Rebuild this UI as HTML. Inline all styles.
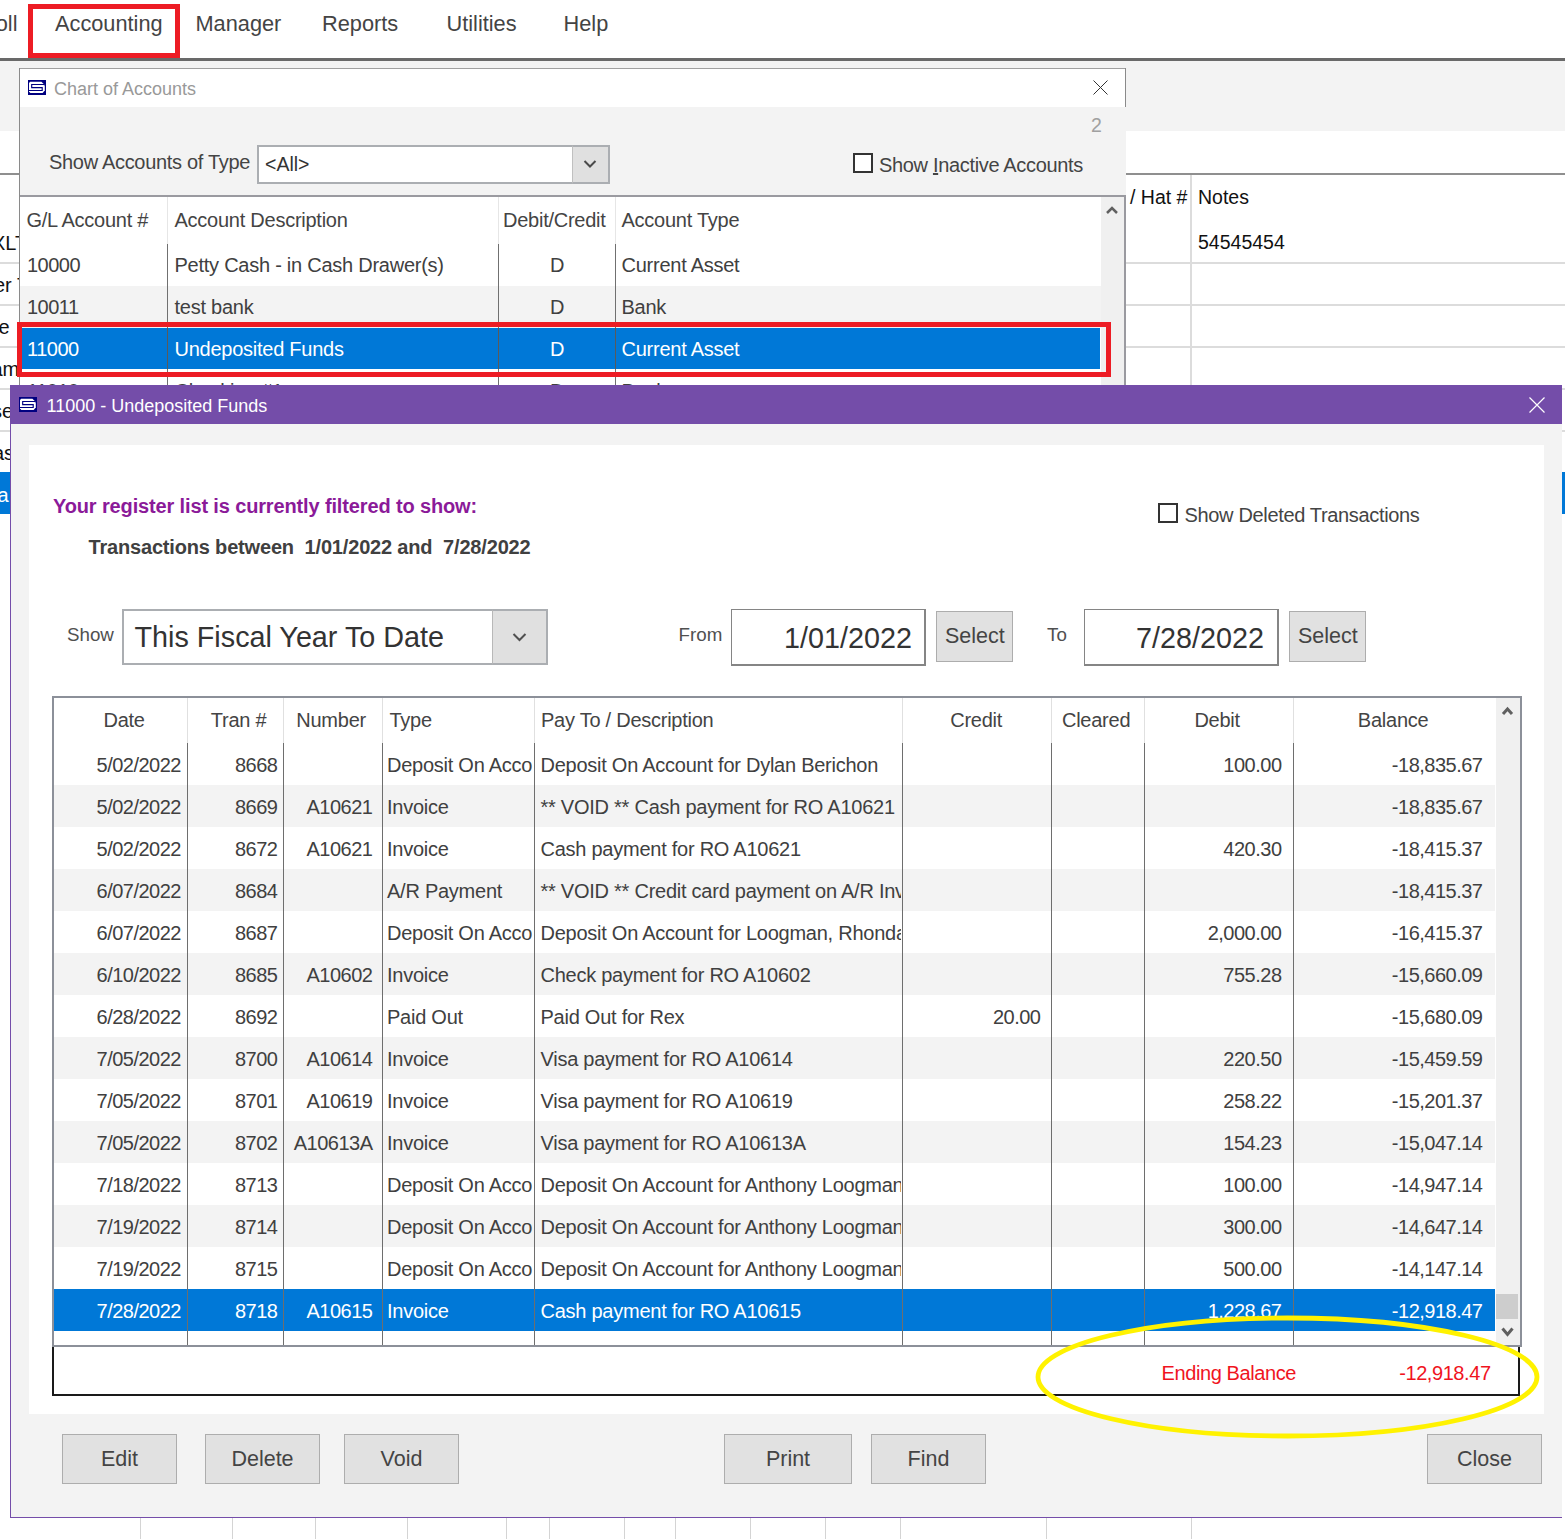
<!DOCTYPE html>
<html><head><meta charset="utf-8"><style>
html,body{margin:0;padding:0;width:1565px;height:1539px;overflow:hidden;background:#fff}
.a{position:absolute}
.t{white-space:nowrap;font-family:"Liberation Sans", sans-serif}
svg.a{overflow:visible}
</style></head><body>
<div class="a" style="left:0px;top:0px;width:1565px;height:1539px;background:#ffffff;"></div>
<div class="a t" style="top:12.59px;font-size:21.75px;line-height:21.75px;color:#444;left:-11.5px;">roll</div>
<div class="a t" style="top:12.59px;font-size:21.75px;line-height:21.75px;color:#444;left:55px;">Accounting</div>
<div class="a t" style="top:12.59px;font-size:21.75px;line-height:21.75px;color:#444;left:195.5px;">Manager</div>
<div class="a t" style="top:12.59px;font-size:21.75px;line-height:21.75px;color:#444;left:322px;">Reports</div>
<div class="a t" style="top:12.59px;font-size:21.75px;line-height:21.75px;color:#444;left:446.5px;">Utilities</div>
<div class="a t" style="top:12.59px;font-size:21.75px;line-height:21.75px;color:#444;left:563.5px;">Help</div>
<div class="a" style="left:28px;top:4px;width:152px;height:54px;border:5px solid #ed1c24;box-sizing:border-box;"></div>
<div class="a" style="left:0px;top:58px;width:1565px;height:3px;background:#696969;"></div>
<div class="a" style="left:0px;top:61px;width:1565px;height:70px;background:#f3f3f3;"></div>
<div class="a" style="left:0px;top:173px;width:1565px;height:2px;background:#8f8f8f;"></div>
<div class="a" style="left:0px;top:262px;width:1565px;height:2px;background:#dcdcdc;"></div>
<div class="a" style="left:0px;top:304px;width:1565px;height:2px;background:#dcdcdc;"></div>
<div class="a" style="left:0px;top:346px;width:1565px;height:2px;background:#dcdcdc;"></div>
<div class="a" style="left:0px;top:388px;width:1565px;height:2px;background:#dcdcdc;"></div>
<div class="a" style="left:0px;top:430px;width:1565px;height:2px;background:#dcdcdc;"></div>
<div class="a" style="left:0px;top:472px;width:1565px;height:42px;background:#0078d7;"></div>
<div class="a" style="left:1190px;top:175px;width:2px;height:400px;background:#dcdcdc;"></div>
<div class="a t" style="top:187.99px;font-size:19.5px;line-height:19.5px;color:#111;left:1130px;">/ Hat #</div>
<div class="a t" style="top:187.99px;font-size:19.5px;line-height:19.5px;color:#111;left:1198px;">Notes</div>
<div class="a t" style="top:233.49px;font-size:19.5px;line-height:19.5px;color:#111;left:1198px;">54545454</div>
<div class="a t" style="top:232.57px;font-size:20px;line-height:20px;color:#111;left:-8px;">XLT</div>
<div class="a t" style="top:274.57px;font-size:20px;line-height:20px;color:#111;left:-6px;">er T</div>
<div class="a t" style="top:316.57px;font-size:20px;line-height:20px;color:#111;left:-1.4px;">e</div>
<div class="a t" style="top:358.57px;font-size:20px;line-height:20px;color:#111;left:-8.6px;">am</div>
<div class="a t" style="top:400.57px;font-size:20px;line-height:20px;color:#111;left:-8px;">se</div>
<div class="a t" style="top:442.57px;font-size:20px;line-height:20px;color:#111;left:-7px;">as</div>
<div class="a t" style="top:484.57px;font-size:20px;line-height:20px;color:#fff;left:-2.6px;">a</div>
<div class="a" style="left:140px;top:1517px;width:1px;height:22px;background:#d4d4d4;"></div>
<div class="a" style="left:232px;top:1517px;width:1px;height:22px;background:#d4d4d4;"></div>
<div class="a" style="left:315px;top:1517px;width:1px;height:22px;background:#d4d4d4;"></div>
<div class="a" style="left:407px;top:1517px;width:1px;height:22px;background:#d4d4d4;"></div>
<div class="a" style="left:506px;top:1517px;width:1px;height:22px;background:#d4d4d4;"></div>
<div class="a" style="left:549px;top:1517px;width:1px;height:22px;background:#d4d4d4;"></div>
<div class="a" style="left:624px;top:1517px;width:1px;height:22px;background:#d4d4d4;"></div>
<div class="a" style="left:675px;top:1517px;width:1px;height:22px;background:#d4d4d4;"></div>
<div class="a" style="left:750px;top:1517px;width:1px;height:22px;background:#d4d4d4;"></div>
<div class="a" style="left:825px;top:1517px;width:1px;height:22px;background:#d4d4d4;"></div>
<div class="a" style="left:900px;top:1517px;width:1px;height:22px;background:#d4d4d4;"></div>
<div class="a" style="left:1046px;top:1517px;width:1px;height:22px;background:#d4d4d4;"></div>
<div class="a" style="left:1191px;top:1517px;width:1px;height:22px;background:#d4d4d4;"></div>
<div class="a" style="left:19px;top:68px;width:1107px;height:330px;background:#f3f3f3;border-left:1px solid #8a8a8a;border-top:1px solid #a0a0a0;box-sizing:border-box"></div>
<div class="a" style="left:1125px;top:68px;width:1px;height:39px;background:#8a8a8a;"></div>
<div class="a" style="left:20px;top:69px;width:1105px;height:38px;background:#ffffff;"></div>
<svg class="a" style="left:28px;top:80px" width="18" height="15" viewBox="0 0 18 15"><rect width="18" height="15" fill="#000080"/><path d="M2.2 1.8 H13.4 L16.8 4.9 V10.6 L14.6 13 H2.3 L1 11.6 V3 Z" fill="#fff"/><path d="M17 5 L15.6 4.5 H3.7 V7.6 H14.2 V10.5 H0.6" fill="none" stroke="#000080" stroke-width="1.15"/></svg>
<div class="a t" style="top:80.26px;font-size:18px;line-height:18px;color:#999;left:54px;">Chart of Accounts</div>
<svg class="a" style="left:1093px;top:80px" width="15" height="15"><path d="M0.5 0.5 L14.5 14.5 M14.5 0.5 L0.5 14.5" stroke="#333" stroke-width="1"/></svg>
<div class="a t" style="top:116.49px;font-size:19.5px;line-height:19.5px;color:#a0a0a0;left:1091px;">2</div>
<div class="a t" style="top:151.57px;font-size:20px;line-height:20px;color:#444;letter-spacing:-0.31px;left:49px;">Show Accounts of Type</div>
<div class="a" style="left:257px;top:145px;width:353px;height:38.5px;background:#ffffff;border:2px solid #abaeb2;box-sizing:border-box;"></div>
<div class="a" style="left:572px;top:145px;width:38px;height:38.5px;background:#e0e0e0;border:2px solid #abaeb2;border-left:1.5px solid #c0c0c0;border-right-width:2.5px;border-bottom-width:2.5px;box-sizing:border-box"></div>
<svg class="a" style="left:0;top:0" width="1" height="1"><path d="M584.5 161 L590 166.5 L595.5 161" fill="none" stroke="#4a4a4a" stroke-width="2"/></svg>
<div class="a t" style="top:155.49px;font-size:19.5px;line-height:19.5px;color:#333;left:265px;">&lt;All&gt;</div>
<div class="a" style="left:853px;top:153px;width:20px;height:20px;background:#ffffff;border:2px solid #333;box-sizing:border-box;"></div>
<div class="a t" style="top:154.57px;font-size:20px;line-height:20px;color:#444;letter-spacing:-0.33px;left:879px;">Show <u>I</u>nactive Accounts</div>
<div class="a" style="left:20px;top:195px;width:1106px;height:200px;background:#ffffff;"></div>
<div class="a" style="left:19px;top:195px;width:1107px;height:2px;background:#9a9aa0;"></div>
<div class="a" style="left:19px;top:68px;width:1px;height:330px;background:#8a8a8a;"></div>
<div class="a" style="left:20px;top:286px;width:1081px;height:42px;background:#f3f3f3;"></div>
<div class="a" style="left:20px;top:370px;width:1081px;height:42px;background:#ffffff;"></div>
<div class="a" style="left:167px;top:197px;width:1px;height:47px;background:#e6e6e6;"></div>
<div class="a" style="left:167px;top:244px;width:1px;height:160px;background:#707070;"></div>
<div class="a" style="left:498px;top:197px;width:1px;height:47px;background:#e6e6e6;"></div>
<div class="a" style="left:498px;top:244px;width:1px;height:160px;background:#707070;"></div>
<div class="a" style="left:615px;top:197px;width:1px;height:47px;background:#e6e6e6;"></div>
<div class="a" style="left:615px;top:244px;width:1px;height:160px;background:#707070;"></div>
<div class="a" style="left:1101px;top:197px;width:24px;height:200px;background:#f0f0f0;"></div>
<div class="a" style="left:1124px;top:195px;width:2px;height:200px;background:#9a9aa0;"></div>
<svg class="a" style="left:1105px;top:205px" width="14" height="10"><path d="M2 8 L7 3 L12 8" fill="none" stroke="#606060" stroke-width="2.5"/></svg>
<div class="a t" style="top:209.57px;font-size:20px;line-height:20px;color:#444;letter-spacing:-0.25px;left:26.5px;">G/L Account #</div>
<div class="a t" style="top:209.57px;font-size:20px;line-height:20px;color:#444;letter-spacing:-0.25px;left:174.5px;">Account Description</div>
<div class="a t" style="top:209.57px;font-size:20px;line-height:20px;color:#444;letter-spacing:-0.25px;left:503px;">Debit/Credit</div>
<div class="a t" style="top:209.57px;font-size:20px;line-height:20px;color:#444;letter-spacing:-0.25px;left:621.5px;">Account Type</div>
<div class="a" style="left:20px;top:328px;width:1080px;height:41px;background:#0078d7;"></div>
<div class="a" style="left:167px;top:328px;width:1px;height:41px;background:#5a5a5a;"></div>
<div class="a" style="left:498px;top:328px;width:1px;height:41px;background:#5a5a5a;"></div>
<div class="a" style="left:615px;top:328px;width:1px;height:41px;background:#5a5a5a;"></div>
<div class="a t" style="top:254.57px;font-size:20px;line-height:20px;color:#404040;letter-spacing:-0.5px;left:27px;">10000</div>
<div class="a t" style="top:254.57px;font-size:20px;line-height:20px;color:#404040;letter-spacing:-0.25px;left:174.5px;">Petty Cash - in Cash Drawer(s)</div>
<div class="a t" style="top:254.57px;font-size:20px;line-height:20px;color:#404040;letter-spacing:-0.25px;left:257.125px;width:600px;text-align:center;">D</div>
<div class="a t" style="top:254.57px;font-size:20px;line-height:20px;color:#404040;letter-spacing:-0.25px;left:621.5px;">Current Asset</div>
<div class="a t" style="top:296.57px;font-size:20px;line-height:20px;color:#404040;letter-spacing:-0.5px;left:27px;">10011</div>
<div class="a t" style="top:296.57px;font-size:20px;line-height:20px;color:#404040;letter-spacing:-0.25px;left:174.5px;">test bank</div>
<div class="a t" style="top:296.57px;font-size:20px;line-height:20px;color:#404040;letter-spacing:-0.25px;left:257.125px;width:600px;text-align:center;">D</div>
<div class="a t" style="top:296.57px;font-size:20px;line-height:20px;color:#404040;letter-spacing:-0.25px;left:621.5px;">Bank</div>
<div class="a t" style="top:338.57px;font-size:20px;line-height:20px;color:#fff;letter-spacing:-0.5px;left:27px;">11000</div>
<div class="a t" style="top:338.57px;font-size:20px;line-height:20px;color:#fff;letter-spacing:-0.25px;left:174.5px;">Undeposited Funds</div>
<div class="a t" style="top:338.57px;font-size:20px;line-height:20px;color:#fff;letter-spacing:-0.25px;left:257.125px;width:600px;text-align:center;">D</div>
<div class="a t" style="top:338.57px;font-size:20px;line-height:20px;color:#fff;letter-spacing:-0.25px;left:621.5px;">Current Asset</div>
<div class="a t" style="top:380.57px;font-size:20px;line-height:20px;color:#404040;letter-spacing:-0.5px;left:27px;">11010</div>
<div class="a t" style="top:380.57px;font-size:20px;line-height:20px;color:#404040;letter-spacing:-0.25px;left:174.5px;">Checking #1</div>
<div class="a t" style="top:380.57px;font-size:20px;line-height:20px;color:#404040;letter-spacing:-0.25px;left:257.125px;width:600px;text-align:center;">D</div>
<div class="a t" style="top:380.57px;font-size:20px;line-height:20px;color:#404040;letter-spacing:-0.25px;left:621.5px;">Bank</div>
<div class="a" style="left:17px;top:322px;width:1094px;height:55px;border:5px solid #ed1c24;box-sizing:border-box;"></div>
<div class="a" style="left:10px;top:385px;width:1552px;height:1133px;background:#f3f3f3;border-left:1px solid #744da9;border-bottom:1px solid #744da9;box-sizing:border-box"></div>
<div class="a" style="left:10px;top:385px;width:1552px;height:39px;background:#744da9;"></div>
<svg class="a" style="left:19px;top:397px" width="18" height="15" viewBox="0 0 18 15"><rect width="18" height="15" fill="#000080"/><path d="M2.2 1.8 H13.4 L16.8 4.9 V10.6 L14.6 13 H2.3 L1 11.6 V3 Z" fill="#fff"/><path d="M17 5 L15.6 4.5 H3.7 V7.6 H14.2 V10.5 H0.6" fill="none" stroke="#000080" stroke-width="1.15"/></svg>
<div class="a t" style="top:397.26px;font-size:18px;line-height:18px;color:#ffffff;left:46.5px;">11000 - Undeposited Funds</div>
<svg class="a" style="left:1529px;top:397px" width="16" height="16"><path d="M0.5 0.5 L15.5 15.5 M15.5 0.5 L0.5 15.5" stroke="#fff" stroke-width="1.2"/></svg>
<div class="a" style="left:29px;top:445px;width:1515px;height:969px;background:#ffffff;"></div>
<div class="a t" style="top:495.57px;font-size:20px;line-height:20px;color:#8b1a99;letter-spacing:-0.14px;font-weight:bold;left:53px;">Your register list is currently filtered to show:</div>
<div class="a t" style="top:537.07px;font-size:20px;line-height:20px;color:#404040;letter-spacing:-0.18px;font-weight:bold;left:88.5px;">Transactions between&nbsp; 1/01/2022 and&nbsp; 7/28/2022</div>
<div class="a" style="left:1158px;top:503px;width:20px;height:20px;background:#ffffff;border:2px solid #333;box-sizing:border-box;"></div>
<div class="a t" style="top:504.57px;font-size:20px;line-height:20px;color:#444;letter-spacing:-0.34px;left:1184.5px;">Show Deleted Transactions</div>
<div class="a t" style="top:626.13px;font-size:18.75px;line-height:18.75px;color:#505050;left:67px;">Show</div>
<div class="a" style="left:122px;top:608.5px;width:426px;height:56.5px;background:#ffffff;border:2px solid #abaeb2;box-sizing:border-box;"></div>
<div class="a" style="left:492px;top:608.5px;width:56px;height:56.5px;background:#e0e0e0;border:2px solid #abaeb2;border-left:1.5px solid #b8b8b8;border-right-width:2.5px;border-bottom-width:2.5px;box-sizing:border-box"></div>
<svg class="a" style="left:0;top:0" width="1" height="1"><path d="M513.5 634 L519.5 640 L525.5 634" fill="none" stroke="#505050" stroke-width="2"/></svg>
<div class="a t" style="top:622.66px;font-size:28.75px;line-height:28.75px;color:#333;left:134.5px;">This Fiscal Year To Date</div>
<div class="a t" style="top:625.63px;font-size:18.75px;line-height:18.75px;color:#505050;left:678.5px;">From</div>
<div class="a" style="left:731px;top:609px;width:195px;height:57px;background:#ffffff;border:1px solid #858585;border-right-width:2px;border-bottom-width:2px;box-sizing:border-box"></div>
<div class="a t" style="top:623.66px;font-size:28.75px;line-height:28.75px;color:#333;right:653px;text-align:right;">1/01/2022</div>
<div class="a" style="left:936px;top:611px;width:77px;height:51px;background:#e1e1e1;border:1px solid #adadad;box-sizing:border-box;"></div>
<div class="a t" style="top:625.80px;font-size:21.5px;line-height:21.5px;color:#444;left:945px;">Select</div>
<div class="a t" style="top:625.63px;font-size:18.75px;line-height:18.75px;color:#505050;left:1047px;">To</div>
<div class="a" style="left:1084px;top:609px;width:195px;height:57px;background:#ffffff;border:1px solid #858585;border-right-width:2px;border-bottom-width:2px;box-sizing:border-box"></div>
<div class="a t" style="top:623.66px;font-size:28.75px;line-height:28.75px;color:#333;right:301px;text-align:right;">7/28/2022</div>
<div class="a" style="left:1289px;top:611px;width:77px;height:51px;background:#e1e1e1;border:1px solid #adadad;box-sizing:border-box;"></div>
<div class="a t" style="top:625.80px;font-size:21.5px;line-height:21.5px;color:#444;left:1298px;">Select</div>
<div class="a" style="left:52px;top:696px;width:1470px;height:651px;background:#ffffff;"></div>
<div class="a" style="left:53px;top:785px;width:1442px;height:42px;background:#f3f3f3;"></div>
<div class="a" style="left:53px;top:869px;width:1442px;height:42px;background:#f3f3f3;"></div>
<div class="a" style="left:53px;top:953px;width:1442px;height:42px;background:#f3f3f3;"></div>
<div class="a" style="left:53px;top:1037px;width:1442px;height:42px;background:#f3f3f3;"></div>
<div class="a" style="left:53px;top:1121px;width:1442px;height:42px;background:#f3f3f3;"></div>
<div class="a" style="left:53px;top:1205px;width:1442px;height:42px;background:#f3f3f3;"></div>
<div class="a" style="left:53px;top:1289px;width:1442px;height:42px;background:#0078d7;"></div>
<div class="a" style="left:187px;top:697px;width:1px;height:46px;background:#e0e0e0;"></div>
<div class="a" style="left:187px;top:743px;width:1px;height:603px;background:#6e6e6e;"></div>
<div class="a" style="left:283px;top:697px;width:1px;height:46px;background:#e0e0e0;"></div>
<div class="a" style="left:283px;top:743px;width:1px;height:603px;background:#6e6e6e;"></div>
<div class="a" style="left:382px;top:697px;width:1px;height:46px;background:#e0e0e0;"></div>
<div class="a" style="left:382px;top:743px;width:1px;height:603px;background:#6e6e6e;"></div>
<div class="a" style="left:534px;top:697px;width:1px;height:46px;background:#e0e0e0;"></div>
<div class="a" style="left:534px;top:743px;width:1px;height:603px;background:#6e6e6e;"></div>
<div class="a" style="left:902px;top:697px;width:1px;height:46px;background:#e0e0e0;"></div>
<div class="a" style="left:902px;top:743px;width:1px;height:603px;background:#6e6e6e;"></div>
<div class="a" style="left:1051px;top:697px;width:1px;height:46px;background:#e0e0e0;"></div>
<div class="a" style="left:1051px;top:743px;width:1px;height:603px;background:#6e6e6e;"></div>
<div class="a" style="left:1144px;top:697px;width:1px;height:46px;background:#e0e0e0;"></div>
<div class="a" style="left:1144px;top:743px;width:1px;height:603px;background:#6e6e6e;"></div>
<div class="a" style="left:1293px;top:697px;width:1px;height:46px;background:#e0e0e0;"></div>
<div class="a" style="left:1293px;top:743px;width:1px;height:603px;background:#6e6e6e;"></div>
<div class="a" style="left:1496px;top:697px;width:24px;height:649px;background:#f0f0f0;"></div>
<div class="a" style="left:1496px;top:1294px;width:22px;height:25px;background:#cdcdcd;"></div>
<svg class="a" style="left:1500px;top:703px" width="15" height="14"><path d="M3 11 L7.5 6 L12 11" fill="none" stroke="#606060" stroke-width="3"/></svg>
<svg class="a" style="left:1500px;top:1325px" width="15" height="14"><path d="M2.5 3.5 L7.5 9.5 L12.5 3.5" fill="none" stroke="#606060" stroke-width="3"/></svg>
<div class="a" style="left:52px;top:696px;width:1470px;height:2px;background:#8c9099;"></div>
<div class="a" style="left:52px;top:696px;width:2px;height:651px;background:#8c9099;"></div>
<div class="a" style="left:1520px;top:696px;width:2px;height:651px;background:#8c9099;"></div>
<div class="a" style="left:52px;top:1345px;width:1470px;height:2px;background:#8c9099;"></div>
<div class="a t" style="top:709.57px;font-size:20px;line-height:20px;color:#444;letter-spacing:-0.25px;left:-175.875px;width:600px;text-align:center;">Date</div>
<div class="a t" style="top:709.57px;font-size:20px;line-height:20px;color:#444;letter-spacing:-0.25px;left:-61.375px;width:600px;text-align:center;">Tran #</div>
<div class="a t" style="top:709.57px;font-size:20px;line-height:20px;color:#444;letter-spacing:-0.25px;left:31.125px;width:600px;text-align:center;">Number</div>
<div class="a t" style="top:709.57px;font-size:20px;line-height:20px;color:#444;letter-spacing:-0.25px;left:389.5px;">Type</div>
<div class="a t" style="top:709.57px;font-size:20px;line-height:20px;color:#444;letter-spacing:-0.25px;left:541px;">Pay To / Description</div>
<div class="a t" style="top:709.57px;font-size:20px;line-height:20px;color:#444;letter-spacing:-0.25px;left:676.125px;width:600px;text-align:center;">Credit</div>
<div class="a t" style="top:709.57px;font-size:20px;line-height:20px;color:#444;letter-spacing:-0.25px;left:796.125px;width:600px;text-align:center;">Cleared</div>
<div class="a t" style="top:709.57px;font-size:20px;line-height:20px;color:#444;letter-spacing:-0.25px;left:917.125px;width:600px;text-align:center;">Debit</div>
<div class="a t" style="top:709.57px;font-size:20px;line-height:20px;color:#444;letter-spacing:-0.25px;left:1093.125px;width:600px;text-align:center;">Balance</div>
<div class="a t" style="top:754.57px;font-size:20px;line-height:20px;color:#404040;letter-spacing:-0.5px;right:1384.0px;text-align:right;">5/02/2022</div>
<div class="a t" style="top:754.57px;font-size:20px;line-height:20px;color:#404040;letter-spacing:-0.5px;right:1287.5px;text-align:right;">8668</div>
<div class="a" style="left:383px;top:741.5px;width:150px;height:40px;overflow:hidden">
<div class="a t" style="top:13.07px;font-size:20px;line-height:20px;color:#404040;letter-spacing:-0.25px;left:4px;">Deposit On Account</div>
</div>
<div class="a" style="left:535px;top:741.5px;width:366px;height:40px;overflow:hidden">
<div class="a t" style="top:13.07px;font-size:20px;line-height:20px;color:#404040;letter-spacing:-0.25px;left:5.5px;">Deposit On Account for Dylan Berichon</div>
</div>
<div class="a t" style="top:754.57px;font-size:20px;line-height:20px;color:#404040;letter-spacing:-0.5px;right:283.5px;text-align:right;">100.00</div>
<div class="a t" style="top:754.57px;font-size:20px;line-height:20px;color:#404040;letter-spacing:-0.5px;right:82.5px;text-align:right;">-18,835.67</div>
<div class="a t" style="top:796.57px;font-size:20px;line-height:20px;color:#404040;letter-spacing:-0.5px;right:1384.0px;text-align:right;">5/02/2022</div>
<div class="a t" style="top:796.57px;font-size:20px;line-height:20px;color:#404040;letter-spacing:-0.5px;right:1287.5px;text-align:right;">8669</div>
<div class="a t" style="top:796.57px;font-size:20px;line-height:20px;color:#404040;letter-spacing:-0.5px;right:1192.5px;text-align:right;">A10621</div>
<div class="a" style="left:383px;top:783.5px;width:150px;height:40px;overflow:hidden">
<div class="a t" style="top:13.07px;font-size:20px;line-height:20px;color:#404040;letter-spacing:-0.25px;left:4px;">Invoice</div>
</div>
<div class="a" style="left:535px;top:783.5px;width:366px;height:40px;overflow:hidden">
<div class="a t" style="top:13.07px;font-size:20px;line-height:20px;color:#404040;letter-spacing:-0.25px;left:5.5px;">** VOID ** Cash payment for RO A10621</div>
</div>
<div class="a t" style="top:796.57px;font-size:20px;line-height:20px;color:#404040;letter-spacing:-0.5px;right:82.5px;text-align:right;">-18,835.67</div>
<div class="a t" style="top:838.57px;font-size:20px;line-height:20px;color:#404040;letter-spacing:-0.5px;right:1384.0px;text-align:right;">5/02/2022</div>
<div class="a t" style="top:838.57px;font-size:20px;line-height:20px;color:#404040;letter-spacing:-0.5px;right:1287.5px;text-align:right;">8672</div>
<div class="a t" style="top:838.57px;font-size:20px;line-height:20px;color:#404040;letter-spacing:-0.5px;right:1192.5px;text-align:right;">A10621</div>
<div class="a" style="left:383px;top:825.5px;width:150px;height:40px;overflow:hidden">
<div class="a t" style="top:13.07px;font-size:20px;line-height:20px;color:#404040;letter-spacing:-0.25px;left:4px;">Invoice</div>
</div>
<div class="a" style="left:535px;top:825.5px;width:366px;height:40px;overflow:hidden">
<div class="a t" style="top:13.07px;font-size:20px;line-height:20px;color:#404040;letter-spacing:-0.25px;left:5.5px;">Cash payment for RO A10621</div>
</div>
<div class="a t" style="top:838.57px;font-size:20px;line-height:20px;color:#404040;letter-spacing:-0.5px;right:283.5px;text-align:right;">420.30</div>
<div class="a t" style="top:838.57px;font-size:20px;line-height:20px;color:#404040;letter-spacing:-0.5px;right:82.5px;text-align:right;">-18,415.37</div>
<div class="a t" style="top:880.57px;font-size:20px;line-height:20px;color:#404040;letter-spacing:-0.5px;right:1384.0px;text-align:right;">6/07/2022</div>
<div class="a t" style="top:880.57px;font-size:20px;line-height:20px;color:#404040;letter-spacing:-0.5px;right:1287.5px;text-align:right;">8684</div>
<div class="a" style="left:383px;top:867.5px;width:150px;height:40px;overflow:hidden">
<div class="a t" style="top:13.07px;font-size:20px;line-height:20px;color:#404040;letter-spacing:-0.25px;left:4px;">A/R Payment</div>
</div>
<div class="a" style="left:535px;top:867.5px;width:366px;height:40px;overflow:hidden">
<div class="a t" style="top:13.07px;font-size:20px;line-height:20px;color:#404040;letter-spacing:-0.25px;left:5.5px;">** VOID ** Credit card payment on A/R Invoice</div>
</div>
<div class="a t" style="top:880.57px;font-size:20px;line-height:20px;color:#404040;letter-spacing:-0.5px;right:82.5px;text-align:right;">-18,415.37</div>
<div class="a t" style="top:922.57px;font-size:20px;line-height:20px;color:#404040;letter-spacing:-0.5px;right:1384.0px;text-align:right;">6/07/2022</div>
<div class="a t" style="top:922.57px;font-size:20px;line-height:20px;color:#404040;letter-spacing:-0.5px;right:1287.5px;text-align:right;">8687</div>
<div class="a" style="left:383px;top:909.5px;width:150px;height:40px;overflow:hidden">
<div class="a t" style="top:13.07px;font-size:20px;line-height:20px;color:#404040;letter-spacing:-0.25px;left:4px;">Deposit On Account</div>
</div>
<div class="a" style="left:535px;top:909.5px;width:366px;height:40px;overflow:hidden">
<div class="a t" style="top:13.07px;font-size:20px;line-height:20px;color:#404040;letter-spacing:-0.25px;left:5.5px;">Deposit On Account for Loogman, Rhonda</div>
</div>
<div class="a t" style="top:922.57px;font-size:20px;line-height:20px;color:#404040;letter-spacing:-0.5px;right:283.5px;text-align:right;">2,000.00</div>
<div class="a t" style="top:922.57px;font-size:20px;line-height:20px;color:#404040;letter-spacing:-0.5px;right:82.5px;text-align:right;">-16,415.37</div>
<div class="a t" style="top:964.57px;font-size:20px;line-height:20px;color:#404040;letter-spacing:-0.5px;right:1384.0px;text-align:right;">6/10/2022</div>
<div class="a t" style="top:964.57px;font-size:20px;line-height:20px;color:#404040;letter-spacing:-0.5px;right:1287.5px;text-align:right;">8685</div>
<div class="a t" style="top:964.57px;font-size:20px;line-height:20px;color:#404040;letter-spacing:-0.5px;right:1192.5px;text-align:right;">A10602</div>
<div class="a" style="left:383px;top:951.5px;width:150px;height:40px;overflow:hidden">
<div class="a t" style="top:13.07px;font-size:20px;line-height:20px;color:#404040;letter-spacing:-0.25px;left:4px;">Invoice</div>
</div>
<div class="a" style="left:535px;top:951.5px;width:366px;height:40px;overflow:hidden">
<div class="a t" style="top:13.07px;font-size:20px;line-height:20px;color:#404040;letter-spacing:-0.25px;left:5.5px;">Check payment for RO A10602</div>
</div>
<div class="a t" style="top:964.57px;font-size:20px;line-height:20px;color:#404040;letter-spacing:-0.5px;right:283.5px;text-align:right;">755.28</div>
<div class="a t" style="top:964.57px;font-size:20px;line-height:20px;color:#404040;letter-spacing:-0.5px;right:82.5px;text-align:right;">-15,660.09</div>
<div class="a t" style="top:1006.57px;font-size:20px;line-height:20px;color:#404040;letter-spacing:-0.5px;right:1384.0px;text-align:right;">6/28/2022</div>
<div class="a t" style="top:1006.57px;font-size:20px;line-height:20px;color:#404040;letter-spacing:-0.5px;right:1287.5px;text-align:right;">8692</div>
<div class="a" style="left:383px;top:993.5px;width:150px;height:40px;overflow:hidden">
<div class="a t" style="top:13.07px;font-size:20px;line-height:20px;color:#404040;letter-spacing:-0.25px;left:4px;">Paid Out</div>
</div>
<div class="a" style="left:535px;top:993.5px;width:366px;height:40px;overflow:hidden">
<div class="a t" style="top:13.07px;font-size:20px;line-height:20px;color:#404040;letter-spacing:-0.25px;left:5.5px;">Paid Out for Rex</div>
</div>
<div class="a t" style="top:1006.57px;font-size:20px;line-height:20px;color:#404040;letter-spacing:-0.5px;right:524.5px;text-align:right;">20.00</div>
<div class="a t" style="top:1006.57px;font-size:20px;line-height:20px;color:#404040;letter-spacing:-0.5px;right:82.5px;text-align:right;">-15,680.09</div>
<div class="a t" style="top:1048.57px;font-size:20px;line-height:20px;color:#404040;letter-spacing:-0.5px;right:1384.0px;text-align:right;">7/05/2022</div>
<div class="a t" style="top:1048.57px;font-size:20px;line-height:20px;color:#404040;letter-spacing:-0.5px;right:1287.5px;text-align:right;">8700</div>
<div class="a t" style="top:1048.57px;font-size:20px;line-height:20px;color:#404040;letter-spacing:-0.5px;right:1192.5px;text-align:right;">A10614</div>
<div class="a" style="left:383px;top:1035.5px;width:150px;height:40px;overflow:hidden">
<div class="a t" style="top:13.07px;font-size:20px;line-height:20px;color:#404040;letter-spacing:-0.25px;left:4px;">Invoice</div>
</div>
<div class="a" style="left:535px;top:1035.5px;width:366px;height:40px;overflow:hidden">
<div class="a t" style="top:13.07px;font-size:20px;line-height:20px;color:#404040;letter-spacing:-0.25px;left:5.5px;">Visa payment for RO A10614</div>
</div>
<div class="a t" style="top:1048.57px;font-size:20px;line-height:20px;color:#404040;letter-spacing:-0.5px;right:283.5px;text-align:right;">220.50</div>
<div class="a t" style="top:1048.57px;font-size:20px;line-height:20px;color:#404040;letter-spacing:-0.5px;right:82.5px;text-align:right;">-15,459.59</div>
<div class="a t" style="top:1090.57px;font-size:20px;line-height:20px;color:#404040;letter-spacing:-0.5px;right:1384.0px;text-align:right;">7/05/2022</div>
<div class="a t" style="top:1090.57px;font-size:20px;line-height:20px;color:#404040;letter-spacing:-0.5px;right:1287.5px;text-align:right;">8701</div>
<div class="a t" style="top:1090.57px;font-size:20px;line-height:20px;color:#404040;letter-spacing:-0.5px;right:1192.5px;text-align:right;">A10619</div>
<div class="a" style="left:383px;top:1077.5px;width:150px;height:40px;overflow:hidden">
<div class="a t" style="top:13.07px;font-size:20px;line-height:20px;color:#404040;letter-spacing:-0.25px;left:4px;">Invoice</div>
</div>
<div class="a" style="left:535px;top:1077.5px;width:366px;height:40px;overflow:hidden">
<div class="a t" style="top:13.07px;font-size:20px;line-height:20px;color:#404040;letter-spacing:-0.25px;left:5.5px;">Visa payment for RO A10619</div>
</div>
<div class="a t" style="top:1090.57px;font-size:20px;line-height:20px;color:#404040;letter-spacing:-0.5px;right:283.5px;text-align:right;">258.22</div>
<div class="a t" style="top:1090.57px;font-size:20px;line-height:20px;color:#404040;letter-spacing:-0.5px;right:82.5px;text-align:right;">-15,201.37</div>
<div class="a t" style="top:1132.57px;font-size:20px;line-height:20px;color:#404040;letter-spacing:-0.5px;right:1384.0px;text-align:right;">7/05/2022</div>
<div class="a t" style="top:1132.57px;font-size:20px;line-height:20px;color:#404040;letter-spacing:-0.5px;right:1287.5px;text-align:right;">8702</div>
<div class="a t" style="top:1132.57px;font-size:20px;line-height:20px;color:#404040;letter-spacing:-0.5px;right:1192.5px;text-align:right;">A10613A</div>
<div class="a" style="left:383px;top:1119.5px;width:150px;height:40px;overflow:hidden">
<div class="a t" style="top:13.07px;font-size:20px;line-height:20px;color:#404040;letter-spacing:-0.25px;left:4px;">Invoice</div>
</div>
<div class="a" style="left:535px;top:1119.5px;width:366px;height:40px;overflow:hidden">
<div class="a t" style="top:13.07px;font-size:20px;line-height:20px;color:#404040;letter-spacing:-0.25px;left:5.5px;">Visa payment for RO A10613A</div>
</div>
<div class="a t" style="top:1132.57px;font-size:20px;line-height:20px;color:#404040;letter-spacing:-0.5px;right:283.5px;text-align:right;">154.23</div>
<div class="a t" style="top:1132.57px;font-size:20px;line-height:20px;color:#404040;letter-spacing:-0.5px;right:82.5px;text-align:right;">-15,047.14</div>
<div class="a t" style="top:1174.57px;font-size:20px;line-height:20px;color:#404040;letter-spacing:-0.5px;right:1384.0px;text-align:right;">7/18/2022</div>
<div class="a t" style="top:1174.57px;font-size:20px;line-height:20px;color:#404040;letter-spacing:-0.5px;right:1287.5px;text-align:right;">8713</div>
<div class="a" style="left:383px;top:1161.5px;width:150px;height:40px;overflow:hidden">
<div class="a t" style="top:13.07px;font-size:20px;line-height:20px;color:#404040;letter-spacing:-0.25px;left:4px;">Deposit On Account</div>
</div>
<div class="a" style="left:535px;top:1161.5px;width:366px;height:40px;overflow:hidden">
<div class="a t" style="top:13.07px;font-size:20px;line-height:20px;color:#404040;letter-spacing:-0.25px;left:5.5px;">Deposit On Account for Anthony Loogman</div>
</div>
<div class="a t" style="top:1174.57px;font-size:20px;line-height:20px;color:#404040;letter-spacing:-0.5px;right:283.5px;text-align:right;">100.00</div>
<div class="a t" style="top:1174.57px;font-size:20px;line-height:20px;color:#404040;letter-spacing:-0.5px;right:82.5px;text-align:right;">-14,947.14</div>
<div class="a t" style="top:1216.57px;font-size:20px;line-height:20px;color:#404040;letter-spacing:-0.5px;right:1384.0px;text-align:right;">7/19/2022</div>
<div class="a t" style="top:1216.57px;font-size:20px;line-height:20px;color:#404040;letter-spacing:-0.5px;right:1287.5px;text-align:right;">8714</div>
<div class="a" style="left:383px;top:1203.5px;width:150px;height:40px;overflow:hidden">
<div class="a t" style="top:13.07px;font-size:20px;line-height:20px;color:#404040;letter-spacing:-0.25px;left:4px;">Deposit On Account</div>
</div>
<div class="a" style="left:535px;top:1203.5px;width:366px;height:40px;overflow:hidden">
<div class="a t" style="top:13.07px;font-size:20px;line-height:20px;color:#404040;letter-spacing:-0.25px;left:5.5px;">Deposit On Account for Anthony Loogman</div>
</div>
<div class="a t" style="top:1216.57px;font-size:20px;line-height:20px;color:#404040;letter-spacing:-0.5px;right:283.5px;text-align:right;">300.00</div>
<div class="a t" style="top:1216.57px;font-size:20px;line-height:20px;color:#404040;letter-spacing:-0.5px;right:82.5px;text-align:right;">-14,647.14</div>
<div class="a t" style="top:1258.57px;font-size:20px;line-height:20px;color:#404040;letter-spacing:-0.5px;right:1384.0px;text-align:right;">7/19/2022</div>
<div class="a t" style="top:1258.57px;font-size:20px;line-height:20px;color:#404040;letter-spacing:-0.5px;right:1287.5px;text-align:right;">8715</div>
<div class="a" style="left:383px;top:1245.5px;width:150px;height:40px;overflow:hidden">
<div class="a t" style="top:13.07px;font-size:20px;line-height:20px;color:#404040;letter-spacing:-0.25px;left:4px;">Deposit On Account</div>
</div>
<div class="a" style="left:535px;top:1245.5px;width:366px;height:40px;overflow:hidden">
<div class="a t" style="top:13.07px;font-size:20px;line-height:20px;color:#404040;letter-spacing:-0.25px;left:5.5px;">Deposit On Account for Anthony Loogman</div>
</div>
<div class="a t" style="top:1258.57px;font-size:20px;line-height:20px;color:#404040;letter-spacing:-0.5px;right:283.5px;text-align:right;">500.00</div>
<div class="a t" style="top:1258.57px;font-size:20px;line-height:20px;color:#404040;letter-spacing:-0.5px;right:82.5px;text-align:right;">-14,147.14</div>
<div class="a t" style="top:1300.57px;font-size:20px;line-height:20px;color:#fff;letter-spacing:-0.5px;right:1384.0px;text-align:right;">7/28/2022</div>
<div class="a t" style="top:1300.57px;font-size:20px;line-height:20px;color:#fff;letter-spacing:-0.5px;right:1287.5px;text-align:right;">8718</div>
<div class="a t" style="top:1300.57px;font-size:20px;line-height:20px;color:#fff;letter-spacing:-0.5px;right:1192.5px;text-align:right;">A10615</div>
<div class="a" style="left:383px;top:1287.5px;width:150px;height:40px;overflow:hidden">
<div class="a t" style="top:13.07px;font-size:20px;line-height:20px;color:#fff;letter-spacing:-0.25px;left:4px;">Invoice</div>
</div>
<div class="a" style="left:535px;top:1287.5px;width:366px;height:40px;overflow:hidden">
<div class="a t" style="top:13.07px;font-size:20px;line-height:20px;color:#fff;letter-spacing:-0.25px;left:5.5px;">Cash payment for RO A10615</div>
</div>
<div class="a t" style="top:1300.57px;font-size:20px;line-height:20px;color:#fff;letter-spacing:-0.5px;right:283.5px;text-align:right;">1,228.67</div>
<div class="a t" style="top:1300.57px;font-size:20px;line-height:20px;color:#fff;letter-spacing:-0.5px;right:82.5px;text-align:right;">-12,918.47</div>
<div class="a" style="left:52px;top:1347px;width:1469px;height:49px;background:#ffffff;"></div>
<div class="a" style="left:52px;top:1347px;width:2px;height:49px;background:#1a1a1a;"></div>
<div class="a" style="left:1518px;top:1347px;width:2px;height:49px;background:#1a1a1a;"></div>
<div class="a" style="left:52px;top:1394px;width:1468px;height:2px;background:#1a1a1a;"></div>
<div class="a t" style="top:1362.57px;font-size:20px;line-height:20px;color:#f0141e;letter-spacing:-0.4px;left:1161.5px;">Ending Balance</div>
<div class="a t" style="top:1362.57px;font-size:20px;line-height:20px;color:#f0141e;letter-spacing:-0.43px;right:74.43px;text-align:right;">-12,918.47</div>
<div class="a" style="left:62px;top:1434px;width:115px;height:50px;background:#e1e1e1;border:1px solid #adadad;box-sizing:border-box;"></div>
<div class="a t" style="top:1448.80px;font-size:21.5px;line-height:21.5px;color:#444;left:-180.5px;width:600px;text-align:center;">Edit</div>
<div class="a" style="left:205px;top:1434px;width:115px;height:50px;background:#e1e1e1;border:1px solid #adadad;box-sizing:border-box;"></div>
<div class="a t" style="top:1448.80px;font-size:21.5px;line-height:21.5px;color:#444;left:-37.5px;width:600px;text-align:center;">Delete</div>
<div class="a" style="left:344px;top:1434px;width:115px;height:50px;background:#e1e1e1;border:1px solid #adadad;box-sizing:border-box;"></div>
<div class="a t" style="top:1448.80px;font-size:21.5px;line-height:21.5px;color:#444;left:101.5px;width:600px;text-align:center;">Void</div>
<div class="a" style="left:724px;top:1434px;width:128px;height:50px;background:#e1e1e1;border:1px solid #adadad;box-sizing:border-box;"></div>
<div class="a t" style="top:1448.80px;font-size:21.5px;line-height:21.5px;color:#444;left:488.0px;width:600px;text-align:center;">Print</div>
<div class="a" style="left:871px;top:1434px;width:115px;height:50px;background:#e1e1e1;border:1px solid #adadad;box-sizing:border-box;"></div>
<div class="a t" style="top:1448.80px;font-size:21.5px;line-height:21.5px;color:#444;left:628.5px;width:600px;text-align:center;">Find</div>
<div class="a" style="left:1427px;top:1434px;width:115px;height:50px;background:#e1e1e1;border:1px solid #adadad;box-sizing:border-box;"></div>
<div class="a t" style="top:1448.80px;font-size:21.5px;line-height:21.5px;color:#444;left:1184.5px;width:600px;text-align:center;">Close</div>
<svg class="a" style="left:0;top:0" width="1565" height="1539"><ellipse cx="1287.5" cy="1377" rx="249.5" ry="59" fill="none" stroke="#fff200" stroke-width="4.8"/></svg>
</body></html>
